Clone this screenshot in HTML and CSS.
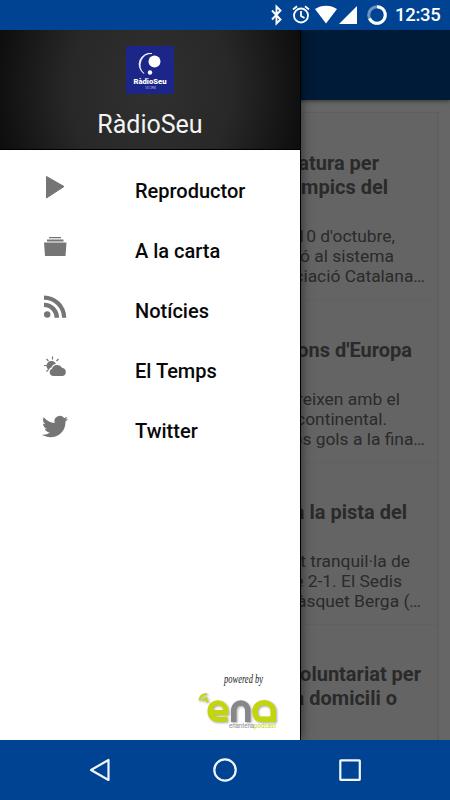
FILE: index.html
```html
<!DOCTYPE html>
<html lang="ca">
<head>
<meta charset="utf-8">
<title>RàdioSeu</title>
<link rel="stylesheet" href="styles.css">
</head>
<body>
<div class="phone">
  <header class="status">
    <svg class="status-icons" width="120" height="30" viewBox="0 0 120 30">
      <path d="M2 10.500 10.500 19.500 6.500 23.500V6.500L10.500 10.500 2 19.500" fill="none" stroke="#fff" stroke-width="1.900"/>
      <g fill="none" stroke="#fff" stroke-width="1.800"><circle cx="31" cy="15.500" r="7"/><path d="M31 11v5l3.500 2M23 9.500l4-3.300M39 9.500l-4-3.300"/></g>
      <path d="M45 9C51 4.500 61 4.500 67 9L56 23.500z" fill="#fff"/>
      <path d="M87 6v18H69z" fill="#fff"/>
      <circle cx="107" cy="15" r="8.300" fill="none" stroke="#6d94c4" stroke-width="3"/>
      <path d="M107 6.700A8.300 8.300 0 1 1 99.500 18.500" fill="none" stroke="#fff" stroke-width="3"/>
    </svg>
    <span class="clock">12:35</span>
  </header>
  <div class="screen">
    <main class="feed">
      <div class="appbar"></div>
      <div class="cards">
        <article class="card first">
          <h2><span class="e59">atura per</span><span class="e50">mpics del</span></h2>
          <p><span class="e43">10 d'octubre,</span><span class="e44">ó al sistema</span><span class="e14">ciació Catalana…</span></p>
        </article>
        <article class="card">
          <h2><span class="e26">ons d'Europa</span></h2>
          <p><span class="e38">reixen amb el</span><span class="e51">continental.</span><span class="e13">os gols a la fina…</span></p>
        </article>
        <article class="card">
          <h2><span class="e31">a la pista del</span></h2>
          <p><span class="e28">t tranquil·la de</span><span class="e36">e 2-1. El Sedis</span><span class="e17">àsquet Berga (…</span></p>
        </article>
        <article class="card last">
          <h2><span class="e17">oluntariat per</span><span class="e41">a domicili o</span></h2>
          <p><span class="e88">la fi i</span></p>
        </article>
      </div>
    </main>
    <aside class="drawer">
      <div class="profile">
        <svg width="48" height="48" viewBox="0 0 48 48">
          <rect width="48" height="48" rx="2.500" fill="#1c2588"/>
          <path d="M26 7.500A11 11 0 0 0 18 27.500 11.500 11.500 0 0 1 26 7.500z" fill="#fff" stroke="#fff" stroke-width=".7"/>
          <circle cx="28.500" cy="15.500" r="6" fill="#fff"/><circle cx="24" cy="26.500" r="2.200" fill="#fff"/>
          <text x="7.500" y="38" textLength="33" lengthAdjust="spacingAndGlyphs" class="logo-name">RàdioSeu</text>
          <text x="19" y="42.500" textLength="10.500" lengthAdjust="spacingAndGlyphs" class="logo-freq">107.2FM</text>
        </svg>
        <h1>RàdioSeu</h1>
      </div>
      <nav class="menu">
        <a><svg width="30" height="30" viewBox="0 0 30 30"><path d="M6.500 4.500 24 14.500 6.500 26z" stroke-linejoin="round" stroke="#757575"/></svg>Reproductor</a>
        <a><svg width="30" height="30" viewBox="0 0 30 30"><path d="M9 5h12v1.200H9zM7 7.500h16.500v2H7zM4 10.500h22.500L25.500 24H5z"/></svg>A la carta</a>
        <a><svg width="30" height="30" viewBox="0 0 30 30"><circle cx="7.200" cy="22.500" r="3.200"/><path d="M4 3.500v4.200A18 18 0 0 1 22 25.700h4.300A22.300 22.300 0 0 0 4 3.500zM4 10.700v4.300A10.500 10.500 0 0 1 14.500 25.700H19A15 15 0 0 0 4 10.700z"/></svg>Notícies</a>
        <a><svg width="30" height="30" viewBox="0 0 30 30"><path d="M8.800 18.200A5 5 0 1 1 16 12C13 12 12 14 11.500 15.500 9.800 15.700 9.300 17 8.800 18.200z"/><path d="M12.500 4.500v3M6.500 7l2 2M18.500 7l-2 2M4 13.500h3M6.500 19.500l1.700-1.700" fill="none" stroke="#757575" stroke-width="1.200"/><path d="M13.500 24A3.800 3.800 0 0 1 12 16.700 5.500 5.500 0 0 1 22 15.700 4.300 4.300 0 0 1 23 24z"/></svg>El Temps</a>
        <a><svg width="30" height="30" viewBox="0 0 30 30"><path d="M28.500 6.800c-.9.400-1.900.7-2.900.8 1-.6 1.800-1.600 2.200-2.800-1 .6-2.100 1-3.200 1.200A5.400 5.400 0 0 0 15.200 11C10.800 10.800 6.900 8.600 4.300 5.300c-1.500 2.600-.6 5.400 1.600 6.900-.9 0-1.700-.3-2.400-.7 0 2.600 1.700 4.700 4.200 5.200-.8.200-1.600.2-2.400.1.700 2.100 2.600 3.600 5 3.700-2.200 1.700-4.900 2.500-7.900 2.200 9 5.700 23.700 1.500 23.600-13.200 1-.7 1.900-1.700 2.500-2.700z" transform="translate(-.5)"/></svg>Twitter</a>
      </nav>
      <svg class="powered" width="90" height="70" viewBox="0 0 90 70">
        <text x="34" y="13" textLength="39" lengthAdjust="spacingAndGlyphs" class="script">powered by</text>
        <g class="brand" fill="none" stroke="#c3d60c" stroke-width="5.500">
          <path d="M20 42.500H36C36.500 29.800 20 29.800 20 41 20 50.500 27 49.500 37.500 49.300" stroke-width="5"/>
          <path d="M43.700 52V41C43.700 30.300 57.800 30.300 57.800 41V52" stroke="#858789"/>
          <path d="M83.200 52V41C83.200 30 65 30 65 41 65 50 70 49.300 75 49.300H83.200"/>
          <path d="M9.500 30.500C10 26.500 13 24 17 24M13 31C13.500 29.500 15 28 17.500 28" stroke-width="2.200"/>
          <circle cx="17" cy="31" r="1.400" fill="#c3d60c" stroke="none"/>
        </g>
        <text x="39" y="58" textLength="47" lengthAdjust="spacingAndGlyphs" class="tag">enantena<tspan fill="#c3d60c">podcast</tspan></text>
      </svg>
    </aside>
  </div>
  <footer class="navbar">
    <svg width="24" height="24" viewBox="0 0 24 24"><path d="M3 12 20.500 2v20z"/></svg>
    <svg width="24" height="24" viewBox="0 0 24 24"><circle cx="12" cy="12" r="10.700"/></svg>
    <svg width="24" height="24" viewBox="0 0 24 24"><rect x="2.300" y="2.300" width="19.500" height="19.500" rx=".5"/></svg>
  </footer>
</div>
</body>
</html>
```

FILE: styles.css
```css
* { box-sizing: border-box; }
body { margin: 0; font-family: Roboto, "Liberation Sans", sans-serif; }
h1, h2, p { margin: 0; }
.phone { width: 450px; height: 800px; display: grid; grid-template-rows: 30px 710px 60px; overflow: hidden; }
.status { background: #004393; display: flex; justify-content: flex-end; padding-right: 10px; }
.status-icons { margin-right: 5px; }
.clock { width: 45px; color: #fff; font-size: 18.500px; font-weight: 500; line-height: 31px; white-space: nowrap; letter-spacing: -.3px; }
.screen { position: relative; overflow: hidden; }
.feed { height: 710px; background: #666; color: #2a2a2a; overflow: hidden; }
.appbar { height: 70px; background: #001b37; box-shadow: 0 1px 4px rgba(0,0,0,.5); }
.cards { margin: 12px 11px 0 0; border: 1px solid #5f5f5f; border-right: 2px solid #5f5f5f; background: #646464; }
.card { height: 162px; padding-top: 36.500px; border-bottom: 1px solid #606060; }
.card.first { height: 188px; padding-top: 38px; }
.card h2 { font-size: 20px; line-height: 24px; font-weight: 700; }
.card p { font-size: 17.400px; line-height: 20.200px; margin-top: 27px; }
.card.last p { margin-top: 28px; }
.card span { display: block; text-align: right; white-space: nowrap; }
.card .e13 { padding-right: 12px; }
.card .e14 { padding-right: 12px; }
.card .e17 { padding-right: 16px; }
.card .e26 { padding-right: 25px; }
.card .e28 { padding-right: 27px; }
.card .e31 { padding-right: 30px; }
.card .e36 { padding-right: 35px; }
.card .e38 { padding-right: 37px; }
.card .e41 { padding-right: 40px; }
.card .e43 { padding-right: 42px; }
.card .e44 { padding-right: 43px; }
.card .e50 { padding-right: 49px; }
.card .e51 { padding-right: 50px; }
.card .e59 { padding-right: 58px; }
.card .e88 { padding-right: 87px; }
.drawer { position: absolute; top: 0; left: 0; width: 300px; height: 710px; background: #fff; display: flex; flex-direction: column; box-shadow: 1px 0 0 #000, 2px 0 10px rgba(0,0,0,.5); }
.profile { height: 120px; padding-top: 16px; display: flex; flex-direction: column; align-items: center; background: radial-gradient(ellipse 180px 220px at 50% 50%, #303030, #282828 45%, #050505 100%); border-bottom: 1px solid #000; }
.profile h1 { margin-top: 15px; color: #f4f4f4; font-size: 25px; line-height: 31px; font-weight: 400; }
.logo-name { font-size: 7px; font-weight: 900; fill: #fff; }
.logo-freq { font-size: 3.500px; fill: #c5c8ed; }
.menu { padding-top: 10.500px; }
.menu a { height: 60px; display: flex; align-items: center; padding-left: 40px; gap: 65px; font-size: 20px; font-weight: 500; color: #080808; }
.menu svg { fill: #757575; margin-bottom: 8px; }
.powered { margin: auto 20px 0 auto; overflow: visible; }
.script { font-family: "Liberation Serif", serif; font-style: italic; font-size: 12px; fill: #222; }
.brand { filter: drop-shadow(1px 1px 1px rgba(0,0,0,.35)); }
.tag { font-size: 6.500px; fill: #888; }
.navbar { background: #004393; display: flex; justify-content: space-between; padding: 18px 88px; }
.navbar svg { fill: none; stroke: #f2f5fa; stroke-width: 2.200; stroke-linejoin: round; }
```
